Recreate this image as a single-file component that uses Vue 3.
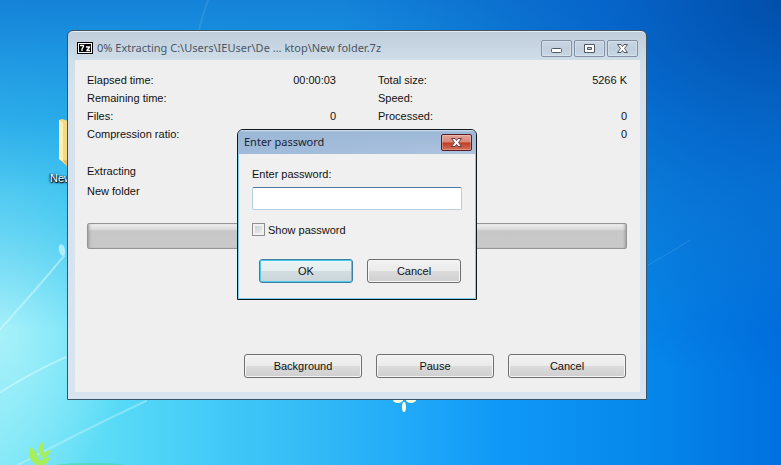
<script setup>
import { ref } from 'vue'

const password = ref('')
const showPassword = ref(false)

const stats = [
  [
    { label: 'Elapsed time:', value: '00:00:03' },
    { label: 'Remaining time:', value: '' },
    { label: 'Files:', value: '0' },
    { label: 'Compression ratio:', value: '' },
  ],
  [
    { label: 'Total size:', value: '5266 K' },
    { label: 'Speed:', value: '' },
    { label: 'Processed:', value: '0' },
    { label: '', value: '0' },
  ],
]
const actions = ['Background', 'Pause', 'Cancel']
</script>

<template>
  <main class="desktop">
    <!-- wallpaper light streaks and leaves -->
    <svg class="wallpaper" width="781" height="465" viewBox="0 0 781 465" aria-hidden="true">
      <g fill="none" stroke="#d8fbff" stroke-linecap="round">
        <path d="M-4 334 Q34 292 64 256" stroke-width="2" opacity=".5" />
        <path d="M-4 395 Q30 373 66 357" stroke-width="2" opacity=".5" />
        <path d="M18 465 Q80 432 146 401" stroke-width="2" opacity=".35" />
        <path d="M648 265 Q668 254 690 240" stroke-width="1" opacity=".12" />
        <path d="M199 30 Q203 14 208 0" stroke-width="2" opacity=".1" />
      </g>
      <ellipse cx="62" cy="250" rx="3" ry="6" fill="#c8f7fd" opacity=".75" transform="rotate(-14 62 250)" />
      <ellipse cx="90" cy="466" rx="38" ry="3" fill="#49d3a2" opacity=".6" />
      <g fill="#a6ee5c">
        <path d="M37 465 C28 460 27 452 31 447 C37 452 40 458 39 465Z" />
        <path d="M41 456 C37 451 38 445 43 442 C44 447 43 450 44 453 C47 450 49 450 51 451 C49 455 46 458 42 458Z" />
        <path d="M36 465 C41 459 45 457 50 457 C49 462 46 464 43 466Z" />
      </g>
      <g fill="#fffde0">
        <ellipse cx="398" cy="400" rx="5" ry="3" />
        <ellipse cx="411" cy="400" rx="5" ry="3" />
        <ellipse cx="404" cy="407" rx="2" ry="5" />
      </g>
    </svg>
    <div class="shortcut">
      <svg width="40" height="50" viewBox="0 0 40 50" aria-hidden="true">
        <path d="M0 2 L3 1 L16 5 L40 5 L40 50 L8 48 L0 41Z" fill="#f6d983" />
        <path d="M0 2 L4 5 L4 43 L0 41Z" fill="#fff0b2" />
        <path d="M4 42 L40 46 L40 50 L8 48Z" fill="#dfb968" />
      </svg>
      <span>New</span>
    </div>

    <section class="window">
      <header class="titlebar">
        <svg class="logo" width="16" height="12" viewBox="0 0 16 12" aria-hidden="true">
          <rect width="16" height="12" fill="#000" />
          <rect x="1" y="1" width="14" height="10" fill="#fff" />
          <rect x="2" y="2" width="12" height="8" fill="#000" />
          <path d="M3 3.500 H6.500 V4.500 L5 7 V9 M9 5 H12.500 V5.500 L10 8 V8.500 H13" fill="none" stroke="#fff" stroke-width="1.300" />
        </svg>
        <h1>0% Extracting C:\Users\IEUser\De ... ktop\New folder.7z</h1>
        <div class="captions">
          <button type="button" aria-label="Minimize">
            <svg width="29" height="15" viewBox="0 0 29 15"><rect x="9.500" y="7.500" width="10" height="4" rx="1" fill="#fff" stroke="#4f5866" /></svg>
          </button>
          <button type="button" aria-label="Maximize">
            <svg width="29" height="15" viewBox="0 0 29 15"><path d="M9.500 3.500 h10 v8 h-10z M12.500 6.500 v2 h4 v-2z" fill="#fff" fill-rule="evenodd" stroke="#4f5866" /></svg>
          </button>
          <button type="button" aria-label="Close">
            <svg width="29" height="15" viewBox="0 0 29 15"><path d="M9.500 3.500 h3.500 l1.500 2 1.500 -2 h3.500 l-3 4 3 4 h-3.500 l-1.500 -2 -1.500 2 h-3.500 l3 -4z" fill="#fff" stroke="#4f5866" /></svg>
          </button>
        </div>
      </header>

      <div class="client">
        <div class="stats">
          <dl v-for="(column, c) in stats" :key="c">
            <div v-for="(row, r) in column" :key="r" class="stat">
              <dt>{{ row.label }}</dt>
              <dd>{{ row.value }}</dd>
            </div>
          </dl>
        </div>
        <div class="status">
          <p>Extracting</p>
          <p>New folder</p>
        </div>
        <div class="progress" role="progressbar" aria-valuenow="0" aria-valuemin="0" aria-valuemax="100"></div>
        <div class="actions">
          <button v-for="action in actions" :key="action" type="button" class="button">{{ action }}</button>
        </div>
      </div>

      <form class="dialog" role="dialog" aria-labelledby="dialog-title" @submit.prevent>
        <header class="dialog-title">
          <h2 id="dialog-title">Enter password</h2>
          <button type="button" class="dialog-close" aria-label="Close">
            <svg width="29" height="15" viewBox="0 0 29 15"><path d="M9.500 3.500 h3.500 l1.500 2 1.500 -2 h3.500 l-3 4 3 4 h-3.500 l-1.500 -2 -1.500 2 h-3.500 l3 -4z" fill="#fff" stroke="#6b3a42" /></svg>
          </button>
        </header>
        <div class="dialog-body">
          <label for="password">Enter password:</label>
          <input id="password" v-model="password" class="field" :type="showPassword ? 'text' : 'password'" />
          <div class="check">
            <input id="show-password" v-model="showPassword" type="checkbox" />
            <label for="show-password">Show password</label>
          </div>
          <div class="dialog-actions">
            <button type="submit" class="button default">OK</button>
            <button type="button" class="button">Cancel</button>
          </div>
        </div>
      </form>
    </section>
  </main>
</template>

<style>
body {
  margin: 0;
}
</style>

<style scoped>
* {
  box-sizing: border-box;
}
h1, h2, p, dl, dd {
  margin: 0;
}
button {
  padding: 0;
  font: inherit;
  color: inherit;
}
svg {
  display: block;
}
.desktop {
  position: relative;
  overflow: hidden;
  min-height: 100vh;
  padding: 30px 134px 65px 67px;
  font: 11px/18px "Liberation Sans", Arial, sans-serif;
  color: #111;
  background:
    radial-gradient(ellipse 440px 380px at 100% 0, rgba(0, 76, 168, .95), rgba(0, 88, 196, .7) 40%, rgba(0, 100, 215, 0)),
    linear-gradient(180deg, #1482d8, rgba(22, 144, 224, .9) 60px, rgba(24, 158, 230, .8) 120px, rgba(30, 170, 235, .5) 190px, rgba(30, 170, 235, 0) 330px),
    radial-gradient(ellipse 130px 170px at 0 335px, rgba(190, 246, 252, .65), rgba(150, 240, 250, 0)),
    linear-gradient(90deg, #7de7f6, #5cdcf6 100px, #45ccf8 200px, #35bcf6 300px, #22abf8 400px, #1098f8 500px, #068aec 630px, #0070e0 781px);
}
.wallpaper {
  position: absolute;
  left: 0;
  top: 0;
}
.shortcut {
  position: absolute;
  left: 50px;
  top: 118px;
  color: #fff;
  text-shadow: 0 1px 2px #000, 1px 1px 1px #000, -1px 0 2px #234;
}
.shortcut svg {
  margin: 0 0 1px 9px;
}
.window {
  position: relative;
  padding: 0 6px 7px 7px;
  border: 1px solid #3c5464;
  border-radius: 6px 6px 0 0;
  background: linear-gradient(180deg, #c0ccda, #cfdfea 30px, #d5e2ed 60px, #d8e4ef);
  box-shadow: inset 0 1px #e6edf4;
}
.titlebar {
  display: flex;
  align-items: center;
  height: 29px;
  padding: 5px 2px 0;
}
.titlebar h1 {
  flex: 1;
  min-width: 0;
  margin-left: 4px;
  overflow: hidden;
  white-space: nowrap;
  font: 11px/18px "Noto Sans", "Open Sans", sans-serif;
  color: #4b5663;
}
.captions {
  display: flex;
  gap: 2px;
}
.captions button,
.dialog-close {
  border: 1px solid #8291a3;
  border-radius: 2px;
  background: linear-gradient(180deg, #cad6e2, #c1cfdd 50%, #c7d7e4);
  box-shadow: inset 0 0 0 1px rgba(255, 255, 255, .25);
}
.client {
  padding: 11px 13px 14px 12px;
  background: #efefef;
}
.stats {
  display: grid;
  grid-template-columns: 1fr 1fr;
  gap: 42px;
}
.stat {
  display: flex;
  justify-content: space-between;
  height: 18px;
}
.status {
  margin-top: 18px;
  line-height: 20px;
}
.progress {
  height: 26px;
  margin-top: 22px;
  border: 1px solid #969696;
  border-radius: 2px;
  background: linear-gradient(180deg, #efefef, #dcdcdc 5px, #c7c7c7 7px, #c9c9c9);
  box-shadow: inset 3px 0 3px -2px #999, inset -3px 0 3px -2px #999;
}
.actions {
  display: flex;
  justify-content: flex-end;
  gap: 14px;
  margin-top: 105px;
  padding-right: 1px;
}
.button {
  height: 24px;
  border: 1px solid #6f6f6f;
  border-radius: 3px;
  background: linear-gradient(180deg, #f2f2f2, #ebebeb 48%, #dbdbdb 52%, #cfcfcf);
  box-shadow: inset 0 0 0 1px #f6f6f6;
}
.actions .button {
  width: 118px;
}
.dialog {
  position: absolute;
  inset: 0 0 2px;
  width: 240px;
  height: fit-content;
  margin: auto;
  border: 1px solid #101820;
  border-radius: 6px 6px 0 0;
  background: linear-gradient(90deg, #98b4d7, #b7cce4);
  box-shadow: inset 0 0 0 1px #7fcfe6;
  overflow: hidden;
}
.dialog-title {
  display: flex;
  align-items: center;
  justify-content: space-between;
  height: 24px;
  padding: 1px 4px 0 6px;
  background: linear-gradient(180deg, #d5e3f1 0, #9db7d7 2px, rgba(165, 190, 220, .5));
}
.dialog-title h2 {
  font: 11px/18px "Noto Sans", "Open Sans", sans-serif;
  color: #1a2430;
}
.dialog-close {
  border-color: #5c1c22;
  background: linear-gradient(180deg, #e5a397, #d58577 48%, #bd3c26 52%, #d2705a);
}
.dialog-body {
  display: flex;
  flex-direction: column;
  margin: 0 1px 1px;
  padding: 11px 13px 15px;
  background: #f0f0f0;
}
.field {
  width: 100%;
  height: 23px;
  margin-top: 4px;
  padding: 0 4px;
  border: 1px solid #b9cfe2;
  border-top-color: #4c76a8;
  border-radius: 2px;
  outline: 0;
  background: #fff;
  font: inherit;
}
.check {
  display: flex;
  align-items: center;
  gap: 3px;
  margin-top: 11px;
}
.check input {
  appearance: none;
  width: 13px;
  height: 13px;
  margin: 0;
  border: 1px solid #8c8f91;
  background: linear-gradient(135deg, #c4c8cc, #f4f4f4);
  box-shadow: inset 0 0 0 2px #f1f1f1;
}
.check input:checked {
  background: #35506e;
}
.dialog-actions {
  display: flex;
  justify-content: flex-end;
  gap: 14px;
  margin-top: 20px;
  padding-right: 1px;
}
.dialog-actions .button {
  width: 94px;
}
.button.default {
  border-color: #3c7fa0;
  background: linear-gradient(180deg, #eaf4f7, #e4eef1 48%, #d2dde1 52%, #cbd5d9);
  box-shadow: inset 0 0 0 1px #4cc9ee;
}
</style>
